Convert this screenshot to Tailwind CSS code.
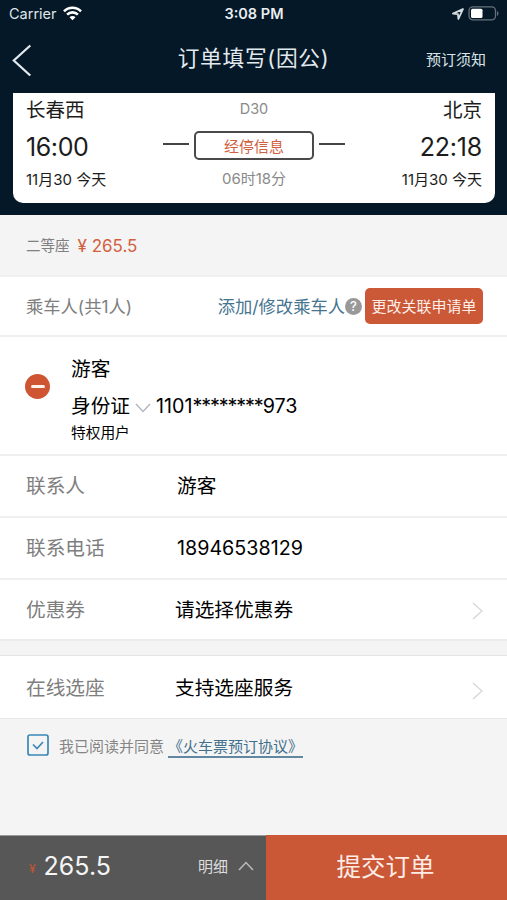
<!DOCTYPE html>
<html lang="zh-CN">
<head>
  <meta charset="UTF-8">
  <meta name="viewport" content="width=device-width, initial-scale=1.0">
  <title>订单填写</title>
  <script src="https://cdn.jsdelivr.net/npm/@tailwindcss/browser@4"></script>
</head>
<body class="bg-[#f4f4f4] font-['Inter','Noto_Sans_CJK_SC',sans-serif] text-black">

  <div class="flex flex-col w-[507px] h-[900px] overflow-hidden whitespace-nowrap leading-none">

    <header class="h-[215px] bg-[#041827] text-white">
      <!-- Status bar -->
      <div class="grid grid-cols-3 items-center h-7 pl-[9px] pr-2">
        <div class="flex items-center gap-1.5 text-[14.5px] text-[#dfe5e9]">
          <span>Carrier</span>
          <svg class="w-[19px] h-[15px] mb-0.5" viewBox="0 0 19 15" fill="none" stroke="#fff" stroke-width="2.6"><path d="M1 5.3a12 12 0 0 1 17 0M4.1 8.6a7.6 7.6 0 0 1 10.8 0"/><path d="M9.5 14.3l-3-3a4.2 4.2 0 0 1 6 0z" fill="#fff" stroke="none"/></svg>
        </div>
        <div class="text-center text-[14.5px] font-semibold text-[#e9edf0]">3:08 PM</div>
        <div class="flex items-center justify-end gap-1">
          <svg class="w-3 h-3" viewBox="0 0 12 12" fill="none" stroke="#d5dce1" stroke-width="1.8" stroke-linejoin="round"><path d="M10.9 1.1L1 5.6l4.9.5.5 4.9z"/></svg>
          <svg class="w-[31px] h-[15px] mb-0.5" viewBox="0 0 31 15"><rect x="1" y=".9" width="26.500" height="13" rx="3.800" fill="none" stroke="#66727b" stroke-width="1.300"/><rect x="3" y="2.800" width="11.500" height="9.200" rx="1.500" fill="#fff"/><path d="M29 5v5q1.500-.8 1.500-2.500T29 5z" fill="#66727b"/></svg>
        </div>
      </div>

      <!-- Title bar -->
      <div class="grid grid-cols-[1fr_auto_1fr] items-center h-[65px] px-3">
        <svg class="w-5 h-8 mb-0.5" viewBox="0 0 20 32" fill="none" stroke="#e3eaee" stroke-width="2.200"><path d="M18.300 1.500L1.800 16.500l16.500 15"/></svg>
        <h1 class="mb-1 text-[21.7px] tracking-[.7px] text-[#e3eaee]">订单填写(因公)</h1>
        <span class="mr-[9px] mb-0.5 text-right text-[15px] text-[#dce3e8]">预订须知</span>
      </div>

      <!-- Trip card -->
      <div class="flex justify-between h-[110px] ml-[13px] mr-3 px-[13px] bg-white rounded-b-[10px] text-[#1c1c1c]">
        <div class="flex flex-col">
          <div class="h-[34px] pt-0.5 flex items-center text-[19.5px]">长春西</div>
          <div class="h-10 flex items-center text-[25px] tracking-[-.4px]">16:00</div>
          <div class="h-6 flex items-center text-[15px]">11月30 今天</div>
        </div>
        <div class="flex flex-col items-center text-[#8a8a8a]">
          <div class="h-8 flex items-center text-[14.5px]">D30</div>
          <div class="h-10 flex items-center gap-[5px]">
            <span class="w-[26px] h-[1.500px] mb-0.5 bg-[#444]"></span>
            <span class="flex items-center justify-center w-[120px] h-[29px] pt-0.5 border-2 border-[#4a4a4a] rounded-[5px] text-[15px] text-[#d0613f]">经停信息</span>
            <span class="w-[26px] h-[1.500px] mb-0.5 bg-[#444]"></span>
          </div>
          <div class="h-[27px] flex items-center text-[15px]">06时18分</div>
        </div>
        <div class="flex flex-col items-end">
          <div class="h-[34px] pt-0.5 flex items-center text-[19.5px]">北京</div>
          <div class="h-10 flex items-center text-[25px] tracking-[-.2px]">22:18</div>
          <div class="h-6 flex items-center text-[15px]">11月30 今天</div>
        </div>
      </div>
    </header>

    <!-- Seat class and price -->
    <div class="flex items-center gap-2 h-[60px] pt-[3px] pl-[26px]">
      <span class="text-[14.5px] text-[#808080]">二等座</span>
      <span class="text-[17px] text-[#d2603f]">¥ 265.5</span>
    </div>

    <!-- Passengers -->
    <section class="bg-white">
      <div class="flex items-center h-[62px] pl-[26px] pr-6 border-y-2 border-[#f0f0f0]">
        <span class="pt-0.5 text-[17.3px] text-[#7e7e7e]">乘车人(共1人)</span>
        <a href="#" class="ml-auto pt-0.5 text-[17.3px] text-[#467590]">添加/修改乘车人</a>
        <span class="flex items-center justify-center w-[17px] h-[17px] rounded-full bg-[#999] text-white text-[13px] font-medium">?</span>
        <button class="w-[118px] h-9 ml-[3px] rounded-[5px] bg-[#cb5836] text-[15px] text-[#fceee9]">更改关联申请单</button>
      </div>

      <div class="flex items-center h-[117px] pl-[25px]">
        <span class="flex items-center justify-center w-[25px] h-[25px] mt-[-18px] rounded-full bg-[#cf5432]">
          <span class="w-3.5 h-[3px] rounded-full bg-[#fff0e8]"></span>
        </span>
        <div class="flex flex-col ml-[21px] pt-[3px]">
          <div class="h-[37px] flex items-center text-[19.7px]">游客</div>
          <div class="h-9 flex items-center text-[19.7px]">
            <span>身份证</span>
            <svg class="w-4 h-[10px] mx-[5px] mt-0.5" viewBox="0 0 16 10" fill="none" stroke="#b5b8c0" stroke-width="1.500"><path d="M1 1l7 7.500L15 1"/></svg>
            <span>1101<span class="tracking-[-1.1px]">********</span>973</span>
          </div>
          <div class="h-[18px] flex items-center text-[14.7px]">特权用户</div>
        </div>
      </div>
    </section>

    <!-- Contact and coupon -->
    <section class="bg-white text-[19.7px]">
      <div class="flex items-center h-[62px] pt-0.5 pl-[26px] border-t-2 border-[#f0f0f0]">
        <span class="w-[151px] text-[#7e7e7e]">联系人</span>
        <span>游客</span>
      </div>
      <div class="flex items-center h-[62px] pt-0.5 pl-[26px] border-t-2 border-[#f0f0f0]">
        <span class="w-[151px] text-[#7e7e7e]">联系电话</span>
        <span>18946538129</span>
      </div>
      <div class="flex items-center h-[63px] pt-0.5 pl-[26px] pr-6 border-y-2 border-t-[#f0f0f0] border-b-[#ececec]">
        <span class="w-[149px] text-[#7e7e7e]">优惠券</span>
        <span>请选择优惠券</span>
        <svg class="w-[11px] h-[18px] ml-auto" viewBox="0 0 11 18" fill="none" stroke="#d8d8d8" stroke-width="1.500"><path d="M1 1l9 8-9 8"/></svg>
      </div>
    </section>

    <!-- Seat selection -->
    <section class="flex items-center h-[63px] mt-[15px] pt-[3px] pl-[26px] pr-6 border-b border-[#e8e8e8] bg-white text-[19.7px] shadow-[0_-1px_0_#e4e4e4]">
      <span class="w-[149px] text-[#7e7e7e]">在线选座</span>
      <span>支持选座服务</span>
      <svg class="w-[11px] h-[18px] ml-auto mt-[5px]" viewBox="0 0 11 18" fill="none" stroke="#d8d8d8" stroke-width="1.500"><path d="M1 1l9 8-9 8"/></svg>
    </section>

    <!-- Agreement -->
    <div class="flex items-center h-[55px] pl-[27px] text-[15px]">
      <svg class="w-[22px] h-[22px] mb-1" viewBox="0 0 22 22" fill="none" stroke="#3a87b5" stroke-width="1.700"><rect x="1" y="1" width="20" height="20" rx="2"/><path d="M6 10.500l4 4 6-6.500"/></svg>
      <span class="ml-[10px] text-[#858585]">我已阅读并同意</span>
      <a href="#" class="flex items-center h-[23px] ml-1 pt-0.5 mb-px border-b-2 border-[#6188a0] text-[#426f8b]">《火车票预订协议》</a>
    </div>

    <!-- Submit bar -->
    <footer class="flex h-[65px] mt-auto">
      <div class="flex items-center w-[266px] pb-1 pl-[29px] pr-3 bg-[#575757] border-t border-[#999] text-[#f5f5f5]">
        <span class="mt-1.5 text-[12px] text-[#c95432]">¥</span>
        <span class="ml-2 text-[25px]">265.5</span>
        <span class="ml-auto text-[15px] text-[#ddd]">明细</span>
        <svg class="w-4 h-[10px] ml-2.5" viewBox="0 0 16 10" fill="none" stroke="#bbb" stroke-width="1.500"><path d="M1 9l7-7.500L15 9"/></svg>
      </div>
      <button class="flex-1 pr-0.5 bg-[#ca5837] text-[24.500px] text-[#fdece5]">提交订单</button>
    </footer>

  </div>
</body>
</html>
